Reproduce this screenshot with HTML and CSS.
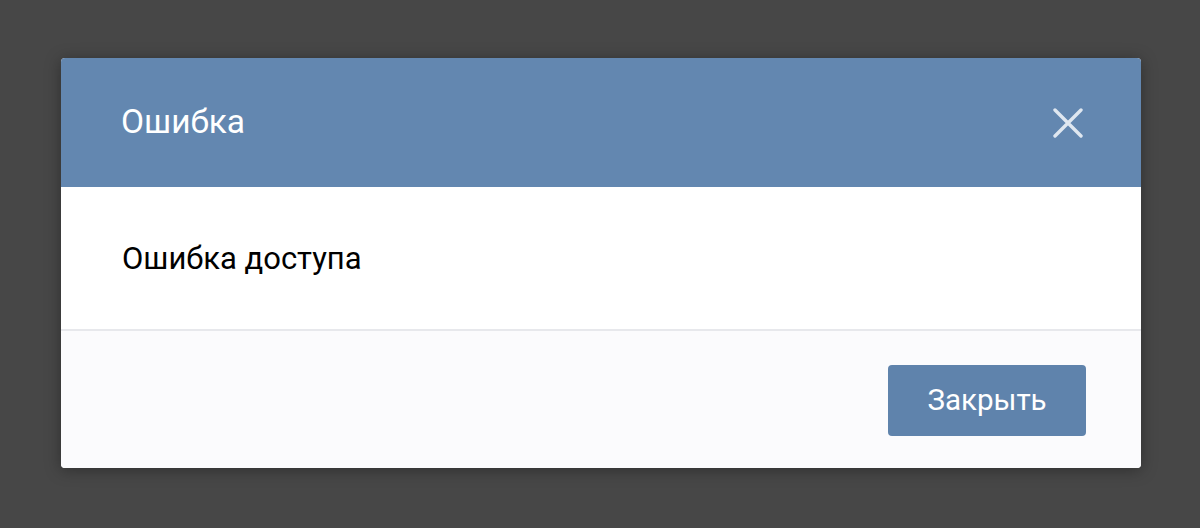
FILE: index.html
```html
<!DOCTYPE html>
<html lang="ru">
<head>
<meta charset="utf-8">
<link rel="stylesheet" href="styles.css">
</head>
<body>
<div class="overlay">
  <div class="modal">
    <div class="modal-header">
      <div class="modal-title">Ошибка</div>
      <button class="modal-close" aria-label="Закрыть">
        <svg width="30" height="30" viewBox="0 0 30 30"><path d="M2 2 L28 28 M28 2 L2 28" stroke="#dfe7f0" stroke-width="3.4" stroke-linecap="round" fill="none"/></svg>
      </button>
    </div>
    <div class="modal-body">Ошибка доступа</div>
    <div class="modal-footer">
      <button class="btn">Закрыть</button>
    </div>
  </div>
</div>
</body>
</html>
```
FILE: styles.css
```css
html, body {
  margin: 0;
  padding: 0;
}
body {
  background: #474747;
  font-family: Roboto, "Noto Sans", sans-serif;
  width: 1200px;
  height: 528px;
  overflow: hidden;
}
.overlay {
  padding-top: 58px;
  padding-left: 61px;
}
.modal {
  width: 1080px;
  background: #fff;
  border-radius: 4px;
  overflow: hidden;
  box-shadow: 0 2px 16px rgba(0,0,0,0.35);
}
.modal-header {
  height: 129px;
  background: #6387b0;
  display: flex;
  align-items: center;
  justify-content: space-between;
  padding: 0 58px 0 60px;
  box-sizing: border-box;
}
.modal-title {
  color: #fff;
  font-size: 33.5px;
  line-height: 40px;
  padding-bottom: 2px;
}
.modal-close {
  background: none;
  border: 0;
  padding: 0;
  width: 30px;
  height: 30px;
  display: flex;
  cursor: pointer;
}
.modal-body {
  height: 144px;
  box-sizing: border-box;
  padding: 52px 61px 0;
  font-size: 31px;
  line-height: 40px;
  color: #000;
  border-bottom: 2px solid #e7e8ec;
}
.modal-footer {
  height: 137px;
  background: #fbfbfd;
  display: flex;
  justify-content: flex-end;
  align-items: flex-start;
  padding: 34px 55px 0 0;
  box-sizing: border-box;
}
.btn {
  width: 198px;
  height: 71px;
  background: #5f83ac;
  color: #fff;
  border: 0;
  border-radius: 4px;
  font-family: Roboto, "Noto Sans", sans-serif;
  font-size: 29.5px;
  padding: 0 0 2px;
}
```
